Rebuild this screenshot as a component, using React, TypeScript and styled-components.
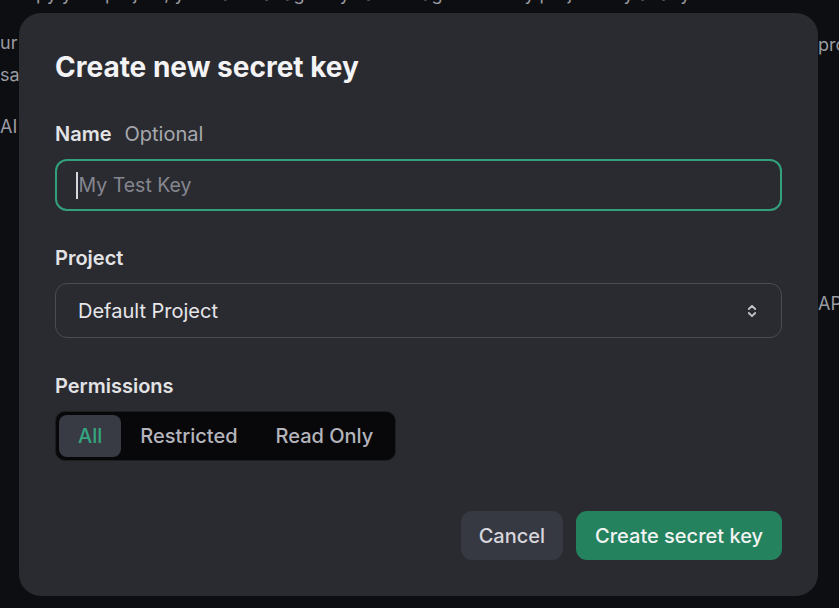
import React from "react";
import styled, { createGlobalStyle } from "styled-components";

const Global = createGlobalStyle`
  html, body { margin: 0; padding: 0; background: #0d0e11; }
  body { font-family: Inter, "Noto Sans", "Liberation Sans", sans-serif; -webkit-font-smoothing: antialiased; }
  * { box-sizing: border-box; }
`;

const Page = styled.div`
  position: relative;
  width: 839px;
  height: 608px;
  overflow: hidden;
  background: #0d0e11;
  color: #9a9ba1;
  font-size: 18px;
`;

const Backdrop = styled.div`
  display: grid;
  grid-template-columns: 1fr auto;
  align-content: start;
  align-items: start;
`;

const TopLine = styled.div`
  grid-column: 1 / span 2;
  margin-top: -17px;
  padding-left: 36px;
  height: 22px;
  line-height: 22px;
  white-space: nowrap;
  overflow: hidden;
`;

const LeftCol = styled.div`
  display: flex;
  flex-direction: column;
  line-height: 32px;
  padding-top: 22px;
`;

const RightCol = styled.div`
  display: flex;
  flex-direction: column;
  line-height: 32px;
  padding-top: 24px;
  width: 21px;
  overflow: hidden;
  white-space: nowrap;
`;

const Gap = styled.div<{ $h: number }>`
  height: ${(p) => p.$h}px;
`;

const Modal = styled.div`
  position: absolute;
  left: 19px;
  top: 13px;
  width: 799px;
  height: 583px;
  background: #2a2b30;
  border-radius: 22px;
  padding: 37px 36px 36px 36px;
  display: flex;
  flex-direction: column;
  color: #ececf1;
`;

const Title = styled.h2`
  margin: 0;
  font-size: 28px;
  line-height: 34px;
  font-weight: 700;
  color: #f3f3f5;
`;

const Field = styled.div<{ $mt: number }>`
  margin-top: ${(p) => p.$mt}px;
  display: flex;
  flex-direction: column;
  gap: 13px;
`;

const Label = styled.div`
  display: flex;
  gap: 13px;
  font-size: 20px;
  line-height: 24px;
  font-weight: 600;
  color: #e3e3e6;
`;

const Hint = styled.span`
  font-weight: 400;
  color: #a7a8ae;
`;

const InputBox = styled.div`
  height: 52px;
  border: 2.5px solid #33a07b;
  border-radius: 12px;
  display: flex;
  align-items: center;
  padding-left: 19px;
  font-size: 19.5px;
  color: #85868f;
`;

const Caret = styled.span`
  width: 1.5px;
  height: 27px;
  background: #d7d7db;
  margin-right: 1px;
`;

const Select = styled.div`
  height: 55px;
  border: 1.5px solid #4a4b55;
  border-radius: 12px;
  display: flex;
  align-items: center;
  justify-content: space-between;
  padding: 0 24px 0 22px;
  font-size: 20px;
  color: #e6e6ea;
`;

const Segmented = styled.div`
  align-self: flex-start;
  display: flex;
  padding: 3px;
  height: 50px;
  background: #08080a;
  border: 1px solid #1c1d21;
  border-radius: 10px;
`;

const Tab = styled.div<{ $active?: boolean }>`
  display: flex;
  align-items: center;
  padding: 0 19px;
  border-radius: 8px;
  font-size: 20px;
  font-weight: 500;
  background: ${(p) => (p.$active ? "#383a44" : "transparent")};
  color: ${(p) => (p.$active ? "#36a57f" : "#b4b5bc")};
`;

const Footer = styled.div`
  margin-top: auto;
  display: flex;
  justify-content: flex-end;
  gap: 13px;
`;

const Button = styled.button<{ $primary?: boolean }>`
  height: 49px;
  border: none;
  border-radius: 11px;
  padding: 0 ${(p) => (p.$primary ? 19 : 18)}px;
  font-family: inherit;
  font-size: 20px;
  font-weight: 500;
  background: ${(p) => (p.$primary ? "#25825f" : "#363842")};
  color: ${(p) => (p.$primary ? "#f2f4f3" : "#d6d6dc")};
`;

const Chevrons = () => (
  <svg width="10" height="16" viewBox="0 0 10 16" fill="none">
    <path d="M1.8 6 L5 2.8 L8.2 6" stroke="#c3c4cb" strokeWidth="1.8" strokeLinecap="round" strokeLinejoin="round" />
    <path d="M1.8 10 L5 13.2 L8.2 10" stroke="#c3c4cb" strokeWidth="1.8" strokeLinecap="round" strokeLinejoin="round" />
  </svg>
);

export default function App() {
  return (
    <>
      <Global />
      <Page>
        <Backdrop>
          <TopLine>py your project, you can manage keys and usage for every project key at any time</TopLine>
          <LeftCol>
            <span>ur</span>
            <span>sa</span>
            <Gap $h={20} />
            <span>AI</span>
          </LeftCol>
          <RightCol>
            <span>pro</span>
            <Gap $h={227} />
            <span>API</span>
          </RightCol>
        </Backdrop>
        <Modal>
          <Title>Create new secret key</Title>
          <Field $mt={38}>
            <Label>
              Name <Hint>Optional</Hint>
            </Label>
            <InputBox>
              <Caret />
              My Test Key
            </InputBox>
          </Field>
          <Field $mt={35}>
            <Label>Project</Label>
            <Select>
              Default Project
              <Chevrons />
            </Select>
          </Field>
          <Field $mt={36}>
            <Label>Permissions</Label>
            <Segmented>
              <Tab $active>All</Tab>
              <Tab>Restricted</Tab>
              <Tab>Read Only</Tab>
            </Segmented>
          </Field>
          <Footer>
            <Button>Cancel</Button>
            <Button $primary>Create secret key</Button>
          </Footer>
        </Modal>
      </Page>
    </>
  );
}
